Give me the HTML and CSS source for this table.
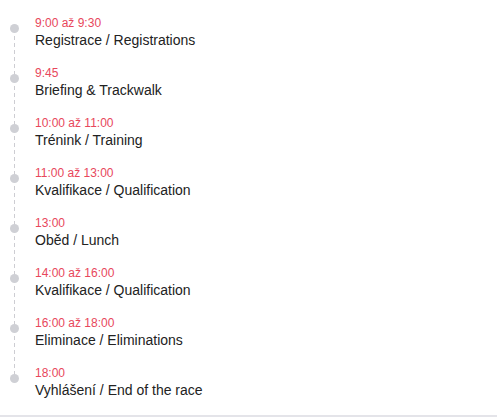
FILE: index.html
```html
<!DOCTYPE html>
<html lang="cs">
<head>
<meta charset="utf-8">
<link rel="stylesheet" href="styles.css">
</head>
<body>
<div class="schedule">
  <ul class="timeline">
    <li class="event"><div class="time">9:00 až 9:30</div><div class="title">Registrace / Registrations</div></li>
    <li class="event"><div class="time">9:45</div><div class="title">Briefing &amp; Trackwalk</div></li>
    <li class="event"><div class="time">10:00 až 11:00</div><div class="title">Trénink / Training</div></li>
    <li class="event"><div class="time">11:00 až 13:00</div><div class="title">Kvalifikace / Qualification</div></li>
    <li class="event"><div class="time">13:00</div><div class="title">Oběd / Lunch</div></li>
    <li class="event"><div class="time">14:00 až 16:00</div><div class="title">Kvalifikace / Qualification</div></li>
    <li class="event"><div class="time">16:00 až 18:00</div><div class="title">Eliminace / Eliminations</div></li>
    <li class="event"><div class="time">18:00</div><div class="title">Vyhlášení / End of the race</div></li>
  </ul>
</div>
</body>
</html>
```
FILE: styles.css
```css
html, body {
  margin: 0;
  padding: 0;
  background: #fff;
}
body {
  font-family: "Liberation Sans", Arial, sans-serif;
}
.schedule {
  height: 415px;
  border-bottom: 2px solid #e4e4e9;
  box-sizing: content-box;
}
.timeline {
  list-style: none;
  margin: 0;
  padding: 15px 0 0 0;
}
.event {
  position: relative;
  height: 50px;
  padding-left: 35px;
  box-sizing: border-box;
}
.event::before {
  content: "";
  position: absolute;
  left: 10px;
  top: 9px;
  width: 9px;
  height: 9px;
  border-radius: 50%;
  background: #cfd0d5;
  z-index: 1;
}
.event::after {
  content: "";
  position: absolute;
  left: 14px;
  top: 14px;
  width: 1px;
  height: 50px;
  background: repeating-linear-gradient(to bottom, #cdcdd2 0 4px, transparent 4px 7px);
}
.event:last-child::after {
  display: none;
}
.time {
  font-size: 12px;
  line-height: 16px;
  color: #e8475c;
}
.title {
  font-size: 14px;
  line-height: 18px;
  color: #222;
}
```
